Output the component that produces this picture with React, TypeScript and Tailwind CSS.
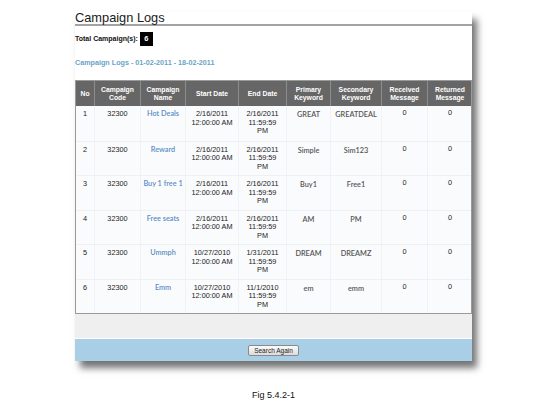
import React from 'react';

type Row = {
  no: number;
  code: string;
  name: string;
  start: string[];
  end: string[];
  primary: string;
  secondary: string;
  received: number;
  returned: number;
};

const rows: Row[] = [
  { no: 1, code: '32300', name: 'Hot Deals', start: ['2/16/2011', '12:00:00 AM'], end: ['2/16/2011', '11:59:59', 'PM'], primary: 'GREAT', secondary: 'GREATDEAL', received: 0, returned: 0 },
  { no: 2, code: '32300', name: 'Reward', start: ['2/16/2011', '12:00:00 AM'], end: ['2/16/2011', '11:59:59', 'PM'], primary: 'Simple', secondary: 'Sim123', received: 0, returned: 0 },
  { no: 3, code: '32300', name: 'Buy 1 free 1', start: ['2/16/2011', '12:00:00 AM'], end: ['2/16/2011', '11:59:59', 'PM'], primary: 'Buy1', secondary: 'Free1', received: 0, returned: 0 },
  { no: 4, code: '32300', name: 'Free seats', start: ['2/16/2011', '12:00:00 AM'], end: ['2/16/2011', '11:59:59', 'PM'], primary: 'AM', secondary: 'PM', received: 0, returned: 0 },
  { no: 5, code: '32300', name: 'Ummph', start: ['10/27/2010', '12:00:00 AM'], end: ['1/31/2011', '11:59:59', 'PM'], primary: 'DREAM', secondary: 'DREAMZ', received: 0, returned: 0 },
  { no: 6, code: '32300', name: 'Emm', start: ['10/27/2010', '12:00:00 AM'], end: ['11/1/2010', '11:59:59', 'PM'], primary: 'em', secondary: 'emm', received: 0, returned: 0 },
];

const widths = ['w-[18px]', 'w-[46px]', 'w-[45px]', 'w-[53px]', 'w-[48px]', 'w-[44px]', 'w-[51px]', 'w-[46px]', 'w-[45px]'];

const headers = [
  ['No'],
  ['Campaign', 'Code'],
  ['Campaign', 'Name'],
  ['Start Date'],
  ['End Date'],
  ['Primary', 'Keyword'],
  ['Secondary', 'Keyword'],
  ['Received', 'Message'],
  ['Returned', 'Message'],
];

const sans = "font-['Liberation_Sans',Arial,sans-serif]";
const soft = "font-['Lato','Open_Sans',sans-serif]";
const cell = 'shrink-0 text-center border-l border-[#f0f2f5]';

const App = (): JSX.Element => {
  return (
    <div className={`w-[547px] h-[417px] bg-white overflow-hidden ${sans}`}>
      <div className="ml-[75px] pt-[12px] w-[397px]">
        <div className="bg-white shadow-[5px_7px_7px_rgba(0,0,0,0.55)]">
          <div className="h-[14px] border-b-2 border-[#a3a3a3] flex items-end">
            <h1 className="text-[12.8px] leading-[14px] text-[#1a1a1a] -mb-[1px]">Campaign Logs</h1>
          </div>
          <div className="h-[54px] pt-[6px]">
            <div className="flex items-center h-[14px] text-[7px] font-bold text-[#111]">
              <span>Total Campaign(s):</span>
              <span className="ml-[2px] bg-black text-white w-[13px] h-[14px] flex items-center justify-center text-[7.5px]">6</span>
            </div>
            <div className="mt-[12px] text-[7.2px] font-bold text-[#6aa4c6]">
              Campaign Logs - 01-02-2011 - 18-02-2011
            </div>
          </div>
          <div className="border border-[#9a9a9a]">
            <div className="flex h-[25px] bg-[#666] text-white text-[6.8px] font-bold leading-[8px]">
              {headers.map((h, i) => (
                <div
                  key={i}
                  className={`${widths[i]} shrink-0 flex flex-col items-center justify-center text-center ${i > 0 ? 'border-l border-[#8d8d8d]' : ''}`}
                >
                  {h.map((t) => (
                    <span key={t}>{t}</span>
                  ))}
                </div>
              ))}
            </div>
            {rows.map((r, idx) => (
              <div
                key={r.no}
                className={`flex h-[34.5px] bg-[#fafbfc] text-[7.3px] leading-[8.5px] text-[#222] ${idx > 0 ? 'border-t border-[#eef1f4]' : ''}`}
              >
                <div className={`${widths[0]} shrink-0 pt-[4px] text-center`}>{r.no}</div>
                <div className={`${widths[1]} ${cell} pt-[4px]`}>{r.code}</div>
                <div className={`${widths[2]} ${cell} pt-[4px] text-[#5b8cc6] font-semibold ${soft} whitespace-nowrap`}>
                  {r.name}
                </div>
                <div className={`${widths[3]} ${cell} pt-[4px]`}>
                  {r.start.map((s) => (
                    <div key={s}>{s}</div>
                  ))}
                </div>
                <div className={`${widths[4]} ${cell} pt-[4px]`}>
                  {r.end.map((s) => (
                    <div key={s}>{s}</div>
                  ))}
                </div>
                <div className={`${widths[5]} ${cell} pt-[5px] font-semibold text-[#555] ${soft}`}>{r.primary}</div>
                <div className={`${widths[6]} ${cell} pt-[5px] font-semibold text-[#555] ${soft}`}>{r.secondary}</div>
                <div className={`${widths[7]} ${cell} pt-[3px]`}>{r.received}</div>
                <div className={`${widths[8]} ${cell} pt-[3px]`}>{r.returned}</div>
              </div>
            ))}
          </div>
          <div className="h-[25px] bg-[#efefef] border-b border-white"></div>
          <div className="h-[22px] bg-[#a9cfe6] flex items-center justify-center">
            <button className="h-[11px] px-[5px] rounded-[2px] border border-[#8a8a8a] bg-gradient-to-b from-[#fbfbfb] to-[#dcdcdc] text-[6.5px] leading-[9px] text-[#222]">
              Search Again
            </button>
          </div>
        </div>
      </div>
      <div className="mt-[28px] text-center text-[9px] text-[#111]">Fig 5.4.2-1</div>
    </div>
  );
};

export default App;
